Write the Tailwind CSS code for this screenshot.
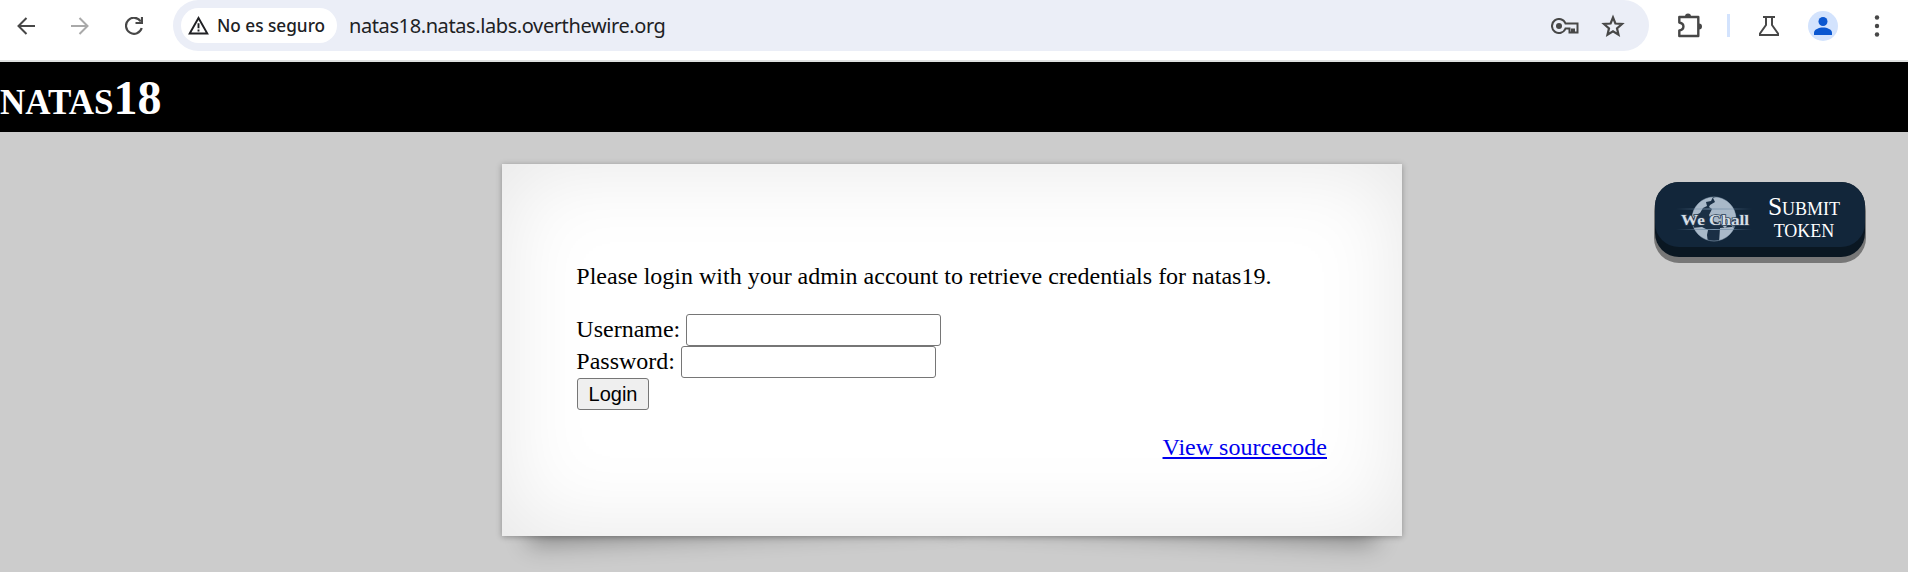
<!DOCTYPE html>
<html lang="es">
<head>
<meta charset="utf-8">
<title>natas18</title>
<script src="https://cdn.jsdelivr.net/npm/@tailwindcss/browser@4"></script>
</head>
<body class="h-[572px] overflow-hidden bg-[#cccccc] font-['Liberation_Serif',serif] text-black">
<div class="flex h-[62px] items-start border-b-2 border-[#dfe1e0] bg-white font-['Noto_Sans',sans-serif] text-[#202124]">
  <div class="flex h-[51px] w-[173px] shrink-0 items-center gap-[36px] pl-[17px] text-[#474747]">
    <svg class="size-[18px]" viewBox="0 0 18 18" fill="none" stroke="currentColor" stroke-width="2"><path d="M18 9H2M9.500 1L1.500 9l8 8"/></svg>
    <svg class="size-[18px] text-[#a9a9a9]" viewBox="0 0 18 18" fill="none" stroke="currentColor" stroke-width="2"><path d="M0 9h16M8.500 1l8 8-8 8"/></svg>
    <svg class="size-[18px]" viewBox="0 0 18 18" fill="none" stroke="currentColor" stroke-width="2.200"><path d="M15.800 4.500A8 8 0 1 0 16.700 11"/><path d="M17 0v6H10.500"/></svg>
  </div>
  <div class="flex h-[51px] w-[1476px] shrink-0 items-center rounded-[26px] bg-[#ebeef7] pl-[8px] pr-[24px]">
    <div class="flex h-[35px] w-[156px] items-center gap-[8px] rounded-full bg-white pl-[7px]">
      <svg class="h-[19px] w-[21px]" viewBox="0 0 21 19" fill="none" stroke="currentColor" stroke-width="1.900"><path d="M1.700 17.500L10.500 2l8.800 15.500z"/><path d="M10.500 7.200v5M10.500 13.500v2"/></svg>
      <span class="w-[110px] whitespace-nowrap text-[17.200px] font-medium">No es seguro</span>
    </div>
    <span class="ml-[12px] whitespace-nowrap text-[20px] tracking-[-0.4px]">natas18.natas.labs.overthewire.org</span>
    <div class="ml-auto flex items-center gap-[22px] text-[#474747]">
      <svg class="h-[16px] w-[28px]" viewBox="0 0 28 16" fill="none" stroke="currentColor" stroke-width="2"><path d="M14.500 5.500A7 7 0 1 0 14.500 10.500h4v4h2.500v-3h2v3h3.500V5.500z"/><circle cx="8" cy="8" r="3" fill="currentColor" stroke="none"/></svg>
      <svg class="size-[24px]" viewBox="0 0 24 24" fill="none" stroke="currentColor" stroke-width="2.200"><path d="M12 3.500l2.400 6 6.600.5-5 4.300 1.500 6.500-5.500-3.400-5.500 3.400L8 14.300 3 10l6.600-.5z"/></svg>
    </div>
  </div>
  <div class="flex h-[51px] flex-1 items-center pl-[28px] text-[#474747]">
    <svg class="-mt-[2px] h-[26px] w-[26px]" viewBox="0 0 26 26" fill="none" stroke="currentColor" stroke-width="2.400"><path d="M2.300 5h19v19H2.300v-5.500c5.500-1 5.500-7 0-8z" stroke-linejoin="round"/><path d="M8 4.500a3 3 0 0 1 6 0zM22 11.500a3 3 0 0 1 0 6z" fill="currentColor" stroke="none"/></svg>
    <div class="ml-[24px] h-[23px] w-[3px] bg-[#d3e3fd]"></div>
    <svg class="ml-[28px] h-[22px] w-[22px]" viewBox="0 0 22 22" fill="none" stroke="currentColor" stroke-width="2"><path d="M5 2h12M8 2v8L2 18.500V20h18v-1.500L14 10V2"/></svg>
    <svg class="ml-[28px] size-[30px]" viewBox="0 0 30 30"><circle cx="15" cy="15" r="15" fill="#d3e3fd"/><circle cx="15" cy="10.500" r="4.500" fill="#0b57d0"/><path d="M6 24v-2.500c0-3 5-5 9-5s9 2 9 5V24z" fill="#0b57d0"/></svg>
    <svg class="ml-[36px] h-[22px] w-[6px]" viewBox="0 0 6 22" fill="currentColor"><circle cx="3" cy="2.500" r="2.200"/><circle cx="3" cy="11" r="2.200"/><circle cx="3" cy="19.500" r="2.200"/></svg>
  </div>
</div>
<header class="flex h-[70px] items-center bg-black pt-px">
  <h1 class="text-[48px] font-bold leading-[56px] text-white [font-variant:small-caps]"><span class="text-[50.500px] leading-none">natas</span>18</h1>
</header>
<main class="flex">
  <section class="relative isolate ml-[502px] mt-[32px] h-[372px] w-[900px] before:absolute before:bottom-[22px] before:left-[24px] before:-z-10 before:h-[74px] before:w-[430px] before:-rotate-3 before:shadow-[0_20px_24px_rgba(0,0,0,0.32)] before:content-[''] after:absolute after:bottom-[22px] after:right-[24px] after:-z-10 after:h-[74px] after:w-[430px] after:rotate-3 after:shadow-[0_20px_24px_rgba(0,0,0,0.32)] after:content-['']">
    <div class="h-full bg-white px-[75px] pt-[99px] text-[24px] leading-[27px] shadow-[0_1px_6px_rgba(0,0,0,0.3),inset_0_0_90px_rgba(0,0,0,0.1)]">
      <p class="-ml-[0.7px] mb-[24px] whitespace-nowrap">Please login with your admin account to retrieve credentials for natas19.</p>
      <form>
        <label class="-ml-[0.7px] flex h-[32px] items-center gap-[5.500px]"><span class="pb-[2px]">Username:</span> <input class="h-[32px] w-[255px] rounded-[3px] border border-[#767676] bg-white"></label>
        <label class="-ml-[0.7px] flex h-[32px] items-center gap-[6px]"><span class="pb-[2px]">Password:</span> <input class="h-[32px] w-[255px] rounded-[3px] border border-[#767676] bg-white"></label>
        <button type="button" class="block h-[32px] w-[72px] rounded-[3px] border border-[#767676] bg-[#efefef] font-['Liberation_Sans',sans-serif] text-[20px] leading-[30px]">Login</button>
      </form>
      <div class="mt-[24px] text-right"><a href="#" class="text-[#0000ee] underline decoration-2 underline-offset-2">View sourcecode</a></div>
    </div>
  </section>
  <a href="#" class="ml-[253px] mt-[50px] flex h-[75px] w-[210px] rounded-[24px] bg-[#0a1722] shadow-[0_5px_0_1px_#777]">
    <span class="flex h-[65px] w-full items-center rounded-[24px] bg-[#12263a] pl-[21px] pt-[9px]">
      <svg class="h-[50px] w-[76px]" viewBox="0 0 76 50">
        <defs>
          <linearGradient id="flare"><stop offset="0" stop-color="#5e7a96" stop-opacity="0"/><stop offset=".5" stop-color="#7e98b0"/><stop offset="1" stop-color="#5e7a96" stop-opacity="0"/></linearGradient>
          <clipPath id="globe"><circle cx="38" cy="25" r="22"/></clipPath>
        </defs>
        <circle cx="38" cy="25" r="22" fill="#1a2f45" stroke="#5d7287"/>
        <g clip-path="url(#globe)" fill="#a9b9c9">
          <path d="M15 20L19 8l10-6 8 1-2 4-5 1 1 4-4 2-3 5-4 2-2 4z"/>
          <path d="M34 11l5-3-2-4 6-2 12 5 7 12v9l-5 5-4-3-4 4-6-5-7-2-3-6 3-6-3-2z"/>
          <path d="M16 34l10-1 6 3-1 5 1 8-8-2-8-8zM44 34l12-1 4 1-5 10-12 5z"/>
        </g>
        <path d="M0 14.500h76v1H0zM0 35h76v1H0z" fill="url(#flare)"/>
        <text x="5" y="30.500" textLength="68" lengthAdjust="spacingAndGlyphs" font-family="Liberation Serif" font-weight="bold" font-size="15" fill="#d5dde5" stroke="#2a3f54" stroke-width="1.500" paint-order="stroke">We Chall</text>
      </svg>
      <span class="ml-[12px] flex w-[80px] flex-col items-center pb-[2px] text-[25.500px] leading-[22px] text-white [font-variant:small-caps]"><span>Submit</span><span>token</span></span>
    </span>
  </a>
</main>
</body>
</html>
